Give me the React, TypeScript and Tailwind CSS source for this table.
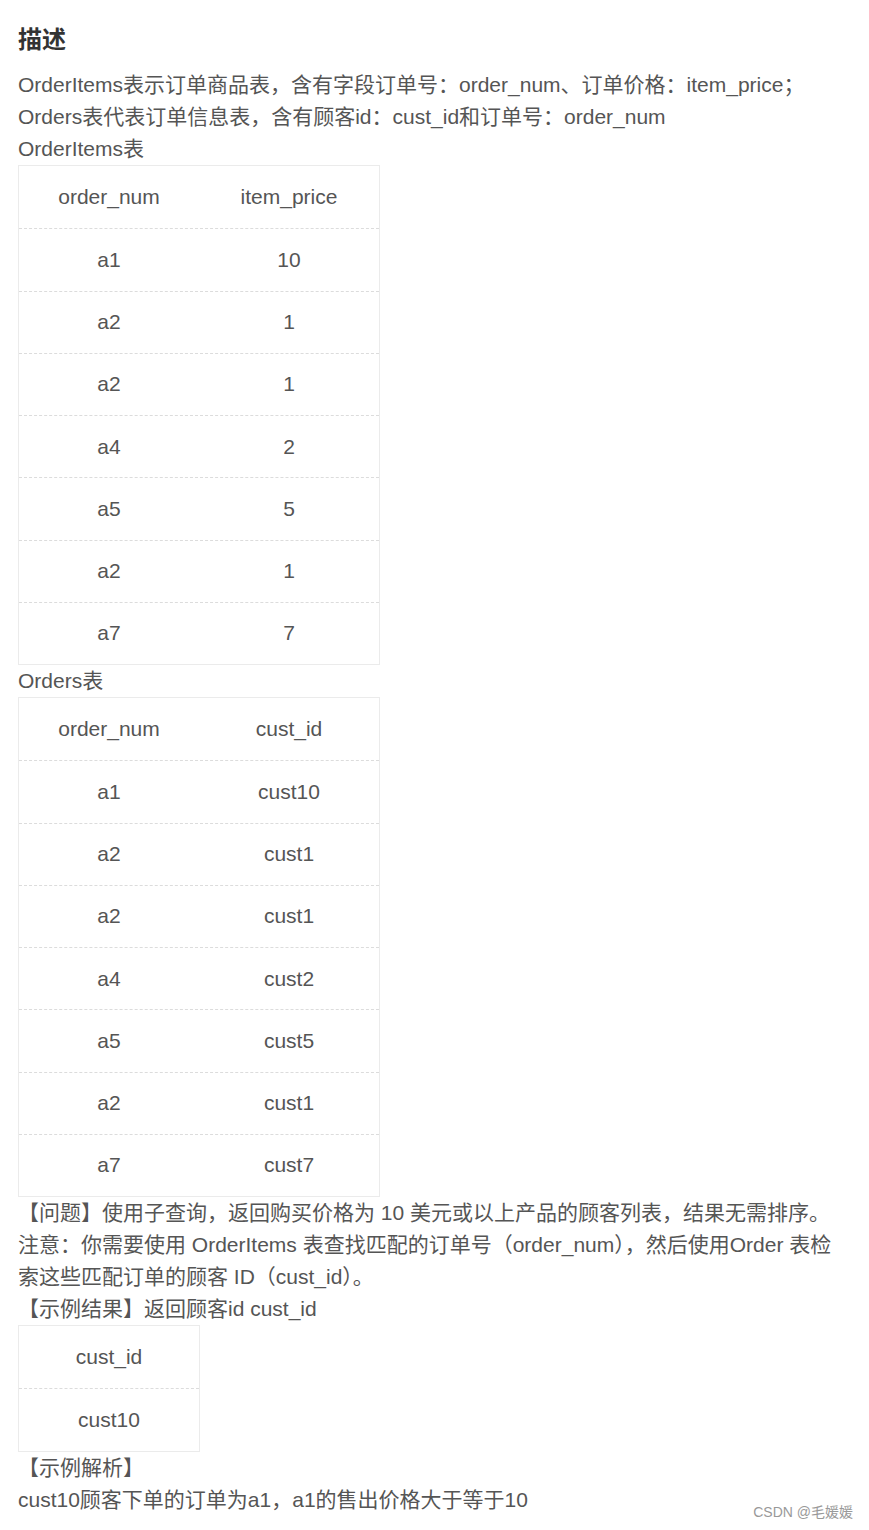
const orderItems = [
  ["a1", "10"],
  ["a2", "1"],
  ["a2", "1"],
  ["a4", "2"],
  ["a5", "5"],
  ["a2", "1"],
  ["a7", "7"],
];

const orders = [
  ["a1", "cust10"],
  ["a2", "cust1"],
  ["a2", "cust1"],
  ["a4", "cust2"],
  ["a5", "cust5"],
  ["a2", "cust1"],
  ["a7", "cust7"],
];

function DataTable({ head, rows, width }: { head: string[]; rows: string[][]; width: string }) {
  const all = [head, ...rows];
  return (
    <div className={`${width} border border-[#ebebeb]`}>
      {all.map((row, i) => (
        <div
          key={i}
          className={`flex h-[62.25px] items-center ${i > 0 ? "border-t border-dashed border-[#dcdcdc]" : ""}`}
        >
          {row.map((cell, j) => (
            <div key={j} className="flex-1 text-center">
              {cell}
            </div>
          ))}
        </div>
      ))}
    </div>
  );
}

export default function App() {
  return (
    <div
      className="relative min-h-[1530px] bg-white pl-[18px] pr-[22px] pt-[22px] text-[21px] leading-[32px] text-[#555]"
      style={{ fontFamily: '"Liberation Sans", Arial, "Noto Sans CJK SC", sans-serif' }}
    >
      <h2 className="mb-[11px] text-[24px] font-bold leading-[36px] text-[#333]">描述</h2>

      <p>OrderItems表示订单商品表，含有字段订单号：order_num、订单价格：item_price；</p>
      <p>Orders表代表订单信息表，含有顾客id：cust_id和订单号：order_num</p>
      <p>OrderItems表</p>
      <DataTable head={["order_num", "item_price"]} rows={orderItems} width="w-[362px]" />

      <p>Orders表</p>
      <DataTable head={["order_num", "cust_id"]} rows={orders} width="w-[362px]" />

      <p>【问题】使用子查询，返回购买价格为 10 美元或以上产品的顾客列表，结果无需排序。</p>
      <p>
        注意：你需要使用 OrderItems 表查找匹配的订单号（order_num），然后使用Order 表检索这些匹配订单的顾客 ID（cust_id）。
      </p>
      <p>【示例结果】返回顾客id cust_id</p>
      <DataTable head={["cust_id"]} rows={[["cust10"]]} width="w-[182px]" />

      <p>【示例解析】</p>
      <p>cust10顾客下单的订单为a1，a1的售出价格大于等于10</p>

      {/* CSDN watermark */}
      <div className="absolute bottom-[10px] right-[16px] text-[14px] leading-[16px] text-[#999]">
        CSDN @毛媛媛
      </div>
    </div>
  );
}
